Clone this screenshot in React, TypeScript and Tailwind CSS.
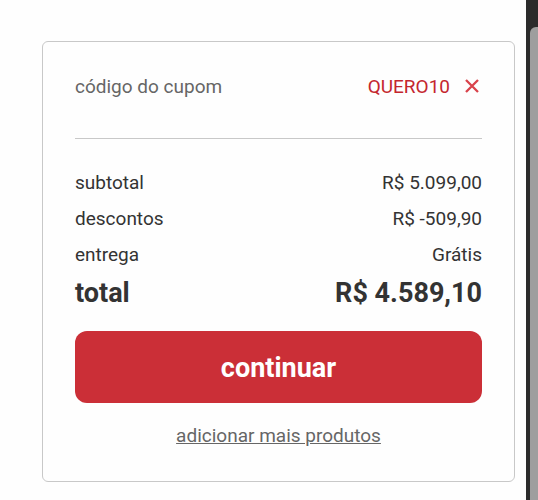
interface SummaryRow {
    label: string;
    value: string;
}

const rows: SummaryRow[] = [
    { label: 'subtotal', value: 'R$ 5.099,00' },
    { label: 'descontos', value: 'R$ -509,90' },
    { label: 'entrega', value: 'Grátis' },
];

function CouponRow() {
    return (
        <div className="flex items-center justify-between pb-[39px] border-b border-[#c8c8c8]">
            <span className="text-[#666666]">código do cupom</span>
            <div className="flex items-center gap-3">
                <span className="text-[#c4262e]">QUERO10</span>
                <button type="button" aria-label="remover cupom" className="flex h-6 w-5 items-start justify-center pt-1 text-[#d9434b]">
                    <svg width="14" height="14" viewBox="0 0 14 14" fill="none" stroke="currentColor" strokeWidth="2.3">
                        <path d="M1 1 13 13M13 1 1 13" />
                    </svg>
                </button>
            </div>
        </div>
    );
}

function OrderSummary() {
    return (
        <section className="rounded-md border border-[#c8c8c8] px-8 py-[33px]">
            <CouponRow />
            <dl className="flex flex-col gap-3 pt-8">
                {rows.map((row) => (
                    <div key={row.label} className="flex justify-between">
                        <dt>{row.label}</dt>
                        <dd>{row.value}</dd>
                    </div>
                ))}
                <div className="flex justify-between text-[27px] leading-7 font-bold">
                    <dt>total</dt>
                    <dd>R$ 4.589,10</dd>
                </div>
            </dl>
            <button type="button" className="mt-6 h-18 w-full rounded-xl bg-[#cb2f37] pt-0.5 text-[27px] font-bold text-white">
                continuar
            </button>
            <div className="mt-[21px] text-center">
                <a href="#produtos" className="text-[#666666] underline">adicionar mais produtos</a>
            </div>
        </section>
    );
}

export default function App() {
    return (
        <div className="flex min-h-screen bg-[#fefefe] font-[Roboto,sans-serif] text-[19px] leading-6 text-[#333333]">
            <main className="min-w-0 flex-1 pt-[41px] pr-[11px] pl-[42px]">
                <OrderSummary />
            </main>
            {/* scrollbar gutter */}
            <div className="flex w-3 bg-[#2b2b2b] pt-[27px] pl-1">
                <div className="flex-1 rounded-tl-md bg-[#9e9e9e]" />
            </div>
        </div>
    );
}
